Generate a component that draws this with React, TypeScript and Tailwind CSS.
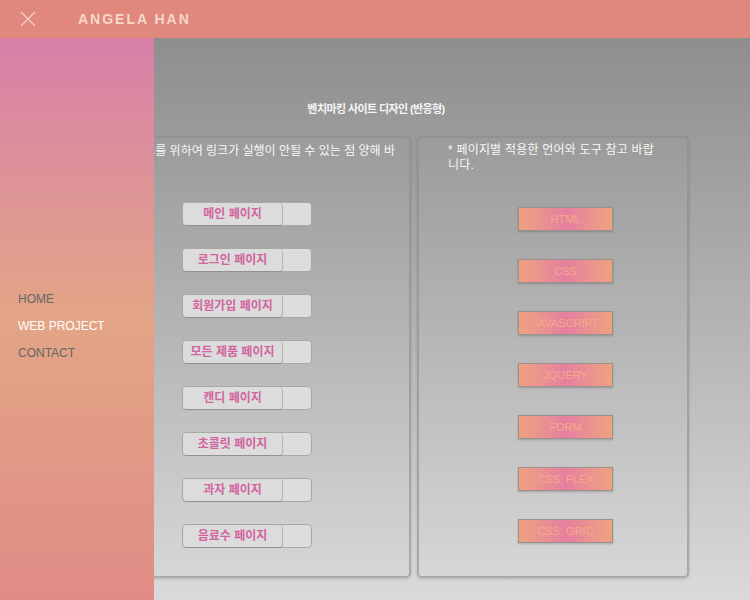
import React from 'react';

const pages = ['메인 페이지', '로그인 페이지', '회원가입 페이지', '모든 제품 페이지', '캔디 페이지', '초콜릿 페이지', '과자 페이지', '음료수 페이지'];
const tools = ['HTML', 'CSS', 'JAVASCRIPT', 'JQUERY', 'FORM', 'CSS: FLEX', 'CSS: GRID'];

const App: React.FC = () => {
  return (
    <div className="relative w-[750px] h-[600px] overflow-hidden font-['Liberation_Sans','Noto_Sans_CJK_KR',sans-serif]">
      {/* header */}
      <header className="h-[38px] bg-[#e0887e] flex items-center">
        <svg width="16" height="16" viewBox="0 0 16 16" className="ml-[20px]">
          <path d="M1 1 L15 15 M15 1 L1 15" stroke="#f4d3c4" strokeWidth="1.3" />
        </svg>
        <h1 className="ml-[42px] text-[14px] font-bold tracking-[2px] text-[#f6d8c8]">ANGELA HAN</h1>
      </header>

      {/* main */}
      <main className="h-[562px] bg-gradient-to-b from-[#8e8e8e] to-[#dadada] pt-[63px]">
        <h2 className="text-center text-[11px] font-bold tracking-[-0.6px] text-[#f5f5f5] leading-[16px] pl-[2px]">
          벤치마킹 사이트 디자인 (반응형)
        </h2>

        <div className="flex gap-[6px] ml-[60px] mt-[19px]">
          <section className="w-[351px] h-[442px] border-2 border-[#8c8c8c]/60 rounded-[5px] shadow-[0_1px_3px_rgba(0,0,0,0.15)]">
            <div className="flex justify-end pr-[14px] pt-[5px] whitespace-nowrap text-[12px] leading-[16px] text-[#f7f7f7]">
              * 포트폴리오 테스트를 위하여 링크가 실행이 안될 수 있는 점 양해 바
            </div>
            <div className="flex flex-col gap-[22px] pl-[120px] mt-[43px]">
              {pages.map((p) => (
                <div key={p} className="w-[130px] h-[24px] flex border border-[#a8a8a8] rounded-[4px] bg-[#dddddd]">
                  <span className="w-[100px] h-full flex items-center justify-center border-r border-[#b4b4b4] rounded-[4px] bg-[#dcdcdc] shadow-[0_1px_1px_rgba(0,0,0,0.15)] text-[12px] font-bold text-[#d2649e]">
                    {p}
                  </span>
                </div>
              ))}
            </div>
          </section>

          <section className="w-[272px] h-[442px] border-2 border-[#8c8c8c]/60 rounded-[5px] shadow-[0_1px_3px_rgba(0,0,0,0.15)]">
            <p className="pl-[29px] pr-[22px] pt-[5px] text-[12px] tracking-[0.2px] leading-[15px] text-[#f7f7f7]">
              * 페이지별 적용한 언어와 도구 참고 바랍니다.
            </p>
            <div className="flex flex-col gap-[28px] pl-[99px] mt-[34px]">
              {tools.map((t) => (
                <div key={t} className="w-[95px] h-[24px] flex items-center justify-center border border-[#9c8f8f] bg-gradient-to-r from-[#eea27e] via-[#e67fa0] to-[#eea27e] shadow-[0_1px_2px_rgba(0,0,0,0.2)] text-[11px] text-[#f3ab86]">
                  {t}
                </div>
              ))}
            </div>
          </section>
        </div>
      </main>

      {/* side menu overlay */}
      <nav className="absolute left-0 top-[38px] bottom-0 w-[154px] bg-gradient-to-b from-[#d87fa8] via-[#e3a585] to-[#e08c86] pt-[253px] pl-[18px]">
        <ul className="flex flex-col gap-[11px] text-[12px] leading-[16px]">
          <li className="text-[#666666]">HOME</li>
          <li className="text-white">WEB PROJECT</li>
          <li className="text-[#666666]">CONTACT</li>
        </ul>
      </nav>
    </div>
  );
};

export default App;
